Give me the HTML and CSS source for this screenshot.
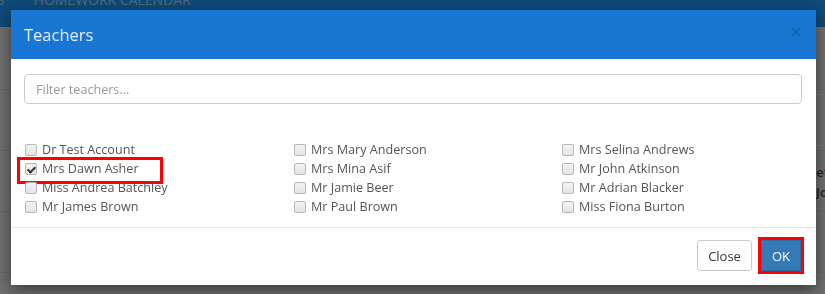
FILE: index.html
```html
<!DOCTYPE html>
<html lang="en">
<head>
  <meta charset="UTF-8">
  <meta name="viewport" content="width=device-width, initial-scale=1.0">
  <title>Teachers - Homework Calendar</title>
  <link rel="stylesheet" href="styles.css">
</head>
<body>
  <nav class="topnav">
    <a class="nav-link first" href="#">LESSONS</a>
    <a class="nav-link" href="#">HOMEWORK CALENDAR</a>
  </nav>

  <div class="page">
    <div class="page-row"></div>
    <div class="page-row"></div>
    <div class="page-row tall">
      <span class="page-text">Details</span>
      <span class="page-text">Mrs Jones</span>
    </div>
    <div class="page-row"></div>
  </div>

  <div class="backdrop">
    <div class="modal">
      <div class="modal-header">
        <h4 class="modal-title">Teachers</h4>
        <button class="close" type="button">&times;</button>
      </div>

      <div class="modal-body">
        <input type="text" class="filter" placeholder="Filter teachers...">

        <div class="teacher-list">
          <label class="teacher"><input type="checkbox"> Dr Test Account</label>
          <label class="teacher"><input type="checkbox"> Mrs Mary Anderson</label>
          <label class="teacher"><input type="checkbox"> Mrs Selina Andrews</label>
          <label class="teacher highlight"><input type="checkbox" checked> Mrs Dawn Asher</label>
          <label class="teacher"><input type="checkbox"> Mrs Mina Asif</label>
          <label class="teacher"><input type="checkbox"> Mr John Atkinson</label>
          <label class="teacher"><input type="checkbox"> Miss Andrea Batchley</label>
          <label class="teacher"><input type="checkbox"> Mr Jamie Beer</label>
          <label class="teacher"><input type="checkbox"> Mr Adrian Blacker</label>
          <label class="teacher"><input type="checkbox"> Mr James Brown</label>
          <label class="teacher"><input type="checkbox"> Mr Paul Brown</label>
          <label class="teacher"><input type="checkbox"> Miss Fiona Burton</label>
        </div>
      </div>

      <div class="modal-footer">
        <button class="btn btn-default" type="button">Close</button>
        <button class="btn btn-primary highlight-btn" type="button">OK</button>
      </div>
    </div>
  </div>
</body>
</html>
```

FILE: styles.css
```css
* {
  box-sizing: border-box;
  margin: 0;
  padding: 0;
}
body {
  background-color: #e0e0e0;
  font-family: 'Open Sans', 'Noto Sans', sans-serif;
  font-size: 13px;
  color: #555;
  overflow: hidden;
  height: 294px;
}

/* page behind the dialog */
.topnav {
  display: flex;
  gap: 29px;
  height: 34px;
  margin-top: -7px;
  background-color: #1e94f0;
  overflow: hidden;
}
.nav-link {
  font-size: 14px;
  line-height: 14px;
  color: #9fd0f8;
  text-decoration: none;
  white-space: nowrap;
}
.nav-link.first {
  margin-left: -55px;
}
.page {
  padding-top: 2px;
}
.page-row {
  height: 61px;
  border-bottom: 1px solid #cfcfcf;
}
.page-row.tall {
  display: flex;
  flex-direction: column;
  align-items: flex-end;
  padding-top: 11px;
  margin-right: -25px;
}
.page-text {
  font-size: 13px;
  font-weight: 600;
  line-height: 20px;
  color: #444;
}

/* dialog */
.backdrop {
  position: fixed;
  inset: 0;
  background-color: rgba(0, 0, 0, 0.5);
}
.modal {
  width: 805px;
  margin: 10px 0 0 11px;
  background-color: #fff;
  box-shadow: 0 5px 15px rgba(0, 0, 0, 0.5);
}
.modal-header {
  display: flex;
  align-items: center;
  justify-content: space-between;
  height: 49px;
  padding: 0 14px 0 13px;
  background-color: #1976d2;
}
.modal-title {
  font-size: 16.5px;
  font-weight: 400;
  color: #e4effb;
}
.close {
  background: none;
  border: none;
  font-family: 'DejaVu Sans', sans-serif;
  font-size: 15px;
  line-height: 1;
  margin-top: -5px;
  color: rgba(0, 0, 0, 0.22);
  cursor: pointer;
}
.modal-body {
  padding: 15px 14px 11px 13px;
}
.filter {
  display: block;
  width: 100%;
  height: 30px;
  padding: 0 11px;
  border: 1px solid #ccc;
  border-radius: 4px;
  font-family: inherit;
  font-size: 12.6px;
  color: #555;
}
.filter::placeholder {
  color: #999;
}
.teacher-list {
  display: grid;
  grid-template-columns: 269px 268px 1fr;
  margin-top: 36px;
}
.teacher {
  display: flex;
  align-items: center;
  gap: 5px;
  height: 19px;
  font-size: 12.6px;
  white-space: nowrap;
  position: relative;
}
.teacher input {
  appearance: none;
  width: 12px;
  height: 12px;
  margin-left: 1px;
  border: 1px solid #b8b8b8;
  border-radius: 2px;
  background: linear-gradient(#f2f2f2, #e4e4e4);
  position: relative;
}
.teacher input:checked::after {
  content: '';
  position: absolute;
  left: 3px;
  top: 1px;
  width: 3px;
  height: 6px;
  border: solid #333;
  border-width: 0 2px 2px 0;
  transform: rotate(45deg);
}
.highlight::after {
  content: '';
  position: absolute;
  left: -7px;
  top: -2px;
  width: 140px;
  height: 21px;
  border: 3px solid #ff0000;
}
.modal-footer {
  display: flex;
  justify-content: flex-end;
  gap: 9px;
  padding: 12px 15px 14px;
  border-top: 1px solid #e8e8e8;
}
.btn {
  height: 31px;
  padding: 0 10px;
  border-radius: 3px;
  font-family: inherit;
  font-size: 13px;
  cursor: pointer;
}
.btn-default {
  background-color: #fff;
  border: 1px solid #ccc;
  color: #333;
}
.btn-primary {
  background-color: #337ab7;
  border: 1px solid #2e6da4;
  color: #fff;
}
.highlight-btn {
  outline: 3px solid #ff0000;
  border-radius: 0;
}
```
